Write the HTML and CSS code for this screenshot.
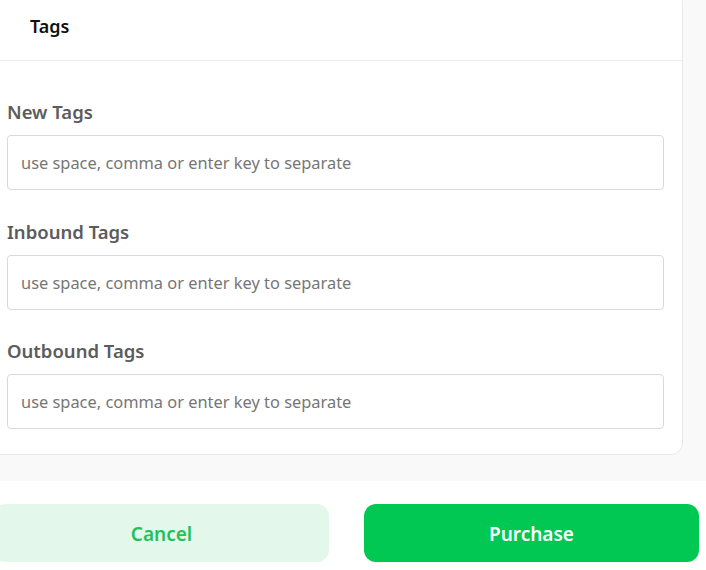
FILE: index.html
```html
<!DOCTYPE html>
<html lang="en">
<head>
<meta charset="utf-8">
<title>Tags</title>
<link rel="stylesheet" href="styles.css">
</head>
<body>
<div class="page-bg">
  <section class="card">
    <header class="card-header">Tags</header>
    <div class="card-body">
      <div class="field">
        <label class="field-label" for="new-tags">New Tags</label>
        <input class="field-input" id="new-tags" type="text" placeholder="use space, comma or enter key to separate">
      </div>
      <div class="field">
        <label class="field-label" for="inbound-tags">Inbound Tags</label>
        <input class="field-input" id="inbound-tags" type="text" placeholder="use space, comma or enter key to separate">
      </div>
      <div class="field">
        <label class="field-label" for="outbound-tags">Outbound Tags</label>
        <input class="field-input" id="outbound-tags" type="text" placeholder="use space, comma or enter key to separate">
      </div>
    </div>
  </section>
</div>
<div class="actions">
  <button class="btn btn-cancel" type="button">Cancel</button>
  <button class="btn btn-primary" type="button">Purchase</button>
</div>
</body>
</html>
```
FILE: styles.css
```css
* { box-sizing: border-box; }
html, body { margin: 0; padding: 0; }
body {
  background: #ffffff;
  font-family: "Noto Sans", "Open Sans", sans-serif;
  overflow: hidden;
}
.page-bg {
  background: #f9f9f9;
  padding-bottom: 26px;
}
.card {
  margin: -10px 23px 0 -20px;
  background: #ffffff;
  border: 1px solid #e9e9e9;
  border-radius: 12px;
}
.card-header {
  height: 70px;
  display: flex;
  align-items: center;
  padding-left: 49px;
  padding-top: 1px;
  border-bottom: 1px solid #efefef;
  font-size: 18px;
  font-weight: 600;
  color: #111111;
}
.card-body {
  padding: 39px 18px 25px 26px;
  display: flex;
  flex-direction: column;
  gap: 30px;
}
.field {
  display: flex;
  flex-direction: column;
  gap: 11px;
}
.field:last-child { margin-top: -1px; }
.field-label {
  font-size: 18.5px;
  line-height: 24px;
  font-weight: 600;
  color: #5c5c5c;
}
.field-input {
  height: 55px;
  width: 100%;
  border: 1px solid #d6d9de;
  border-radius: 4px;
  padding: 0 13px;
  font-family: inherit;
  font-size: 16.4px;
  color: #333;
  background: #fff;
  outline: none;
}
.field-input::placeholder { color: #767676; }
.actions {
  display: flex;
  gap: 35px;
  margin: 23px 7px 0 -6px;
}
.btn {
  flex: 1;
  height: 58px;
  border: none;
  border-radius: 12px;
  padding-top: 3px;
  font-family: inherit;
  font-size: 19px;
  font-weight: 600;
  cursor: pointer;
}
.btn-cancel { background: #e3f8ea; color: #1cc35a; }
.btn-primary { background: #00c853; color: #ffffff; }
```
